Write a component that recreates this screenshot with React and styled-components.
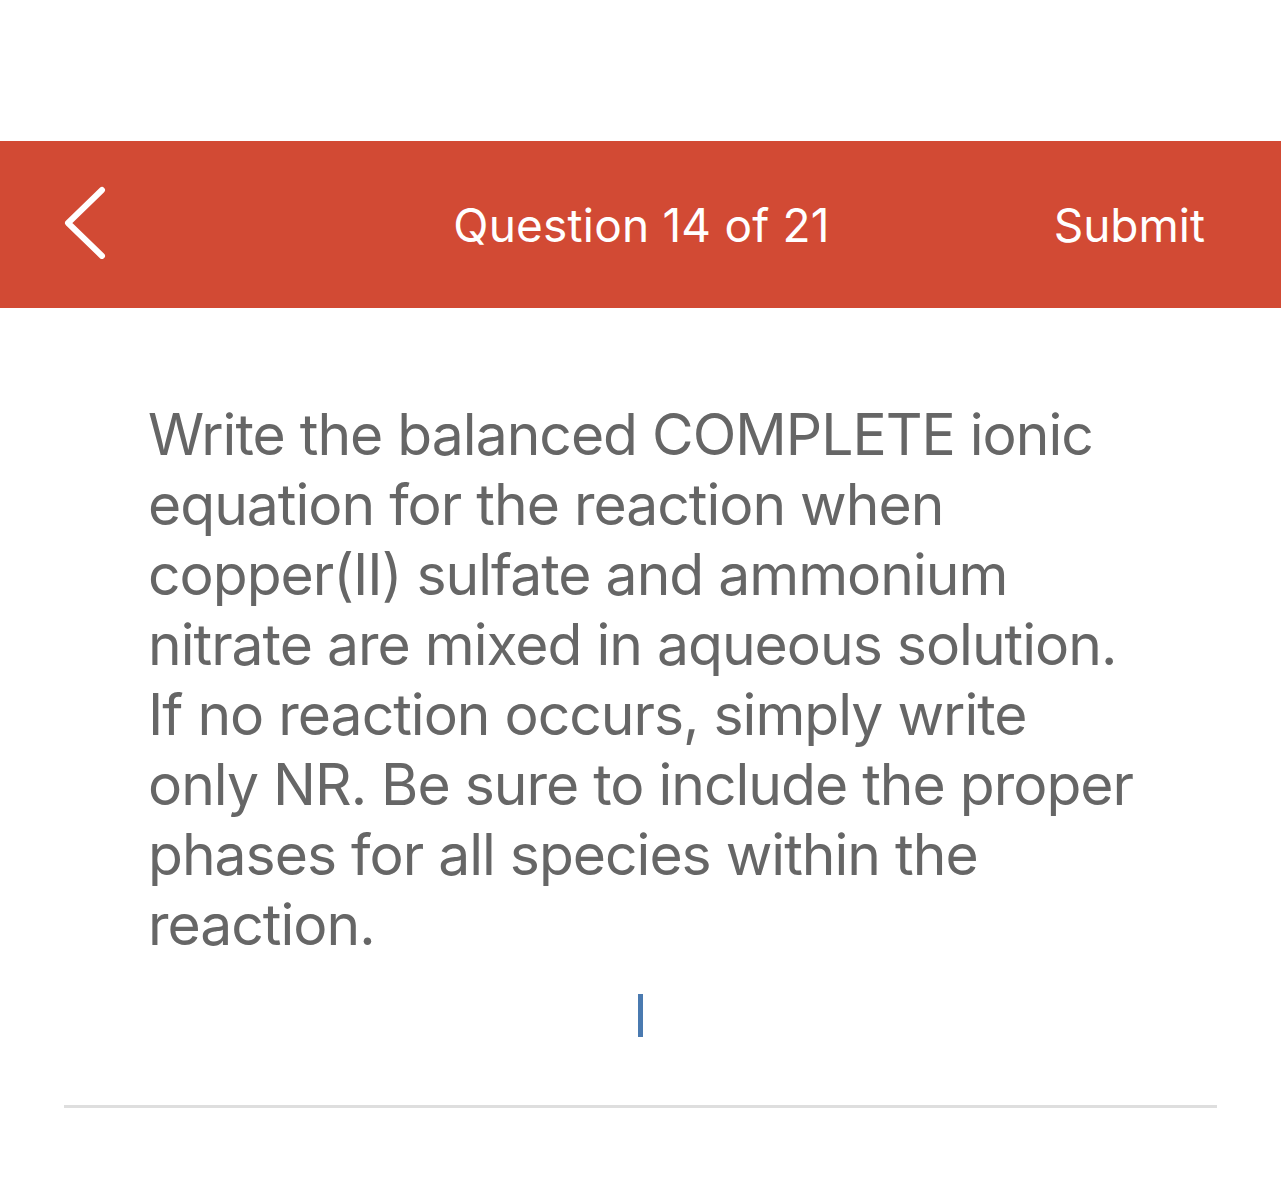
import React from 'react';
import styled, { createGlobalStyle } from 'styled-components';

const Global = createGlobalStyle`
  body {
    margin: 0;
    background: #fff;
    font-family: Inter, "Noto Sans", sans-serif;
  }
`;

const Page = styled.div`
  padding-top: 141px;
  min-height: 1179px;
  box-sizing: border-box;
`;

const Header = styled.header`
  display: grid;
  grid-template-columns: 1fr auto 1fr;
  align-items: center;
  height: 167px;
  background: #d24a34;
  color: #fff;
  padding: 0 76px;
`;

const Back = styled.button`
  justify-self: start;
  margin: -8px 0 0 -16px;
  background: none;
  border: 0;
  padding: 0;
  display: flex;
  cursor: pointer;
`;

const Title = styled.h1`
  margin: 0 0 0 2px;
  font-size: 46px;
  font-weight: 400;
  letter-spacing: 0.2px;
`;

const Action = styled.button`
  justify-self: end;
  background: none;
  border: 0;
  padding: 0;
  color: #fff;
  font-family: inherit;
  font-size: 46px;
  cursor: pointer;
`;

const Body = styled.main`
  padding: 92px 64px 0;
`;

const Prompt = styled.p`
  margin: 0;
  padding-left: 84px;
  color: #666;
  font-size: 57px;
  line-height: 70px;
  letter-spacing: -1px;
`;

const Answer = styled.div`
  display: flex;
  justify-content: center;
  padding: 34px 0 68px;
  border-bottom: 3px solid #dedede;
`;

const Caret = styled.span`
  width: 5px;
  height: 43px;
  background: #4a7ab0;
`;

const lines = [
  'Write the balanced COMPLETE ionic',
  'equation for the reaction when',
  'copper(II) sulfate and ammonium',
  'nitrate are mixed in aqueous solution.',
  'If no reaction occurs, simply write',
  'only NR. Be sure to include the proper',
  'phases for all species within the',
  'reaction.',
];

export default function App() {
  return (
    <Page>
      <Global />
      <Header>
        <Back aria-label="Back">
          <svg width="48" height="76" viewBox="0 0 48 76">
            <path d="M42 7 L8 40 L42 73" fill="none" stroke="#fff" strokeWidth="6" strokeLinecap="round" strokeLinejoin="round" />
          </svg>
        </Back>
        <Title>Question 14 of 21</Title>
        <Action>Submit</Action>
      </Header>
      <Body>
        <Prompt>
          {lines.map((l, i) => (
            <React.Fragment key={i}>
              {l}
              {i < lines.length - 1 && <br />}
            </React.Fragment>
          ))}
        </Prompt>
        <Answer>
          <Caret />
        </Answer>
      </Body>
    </Page>
  );
}
